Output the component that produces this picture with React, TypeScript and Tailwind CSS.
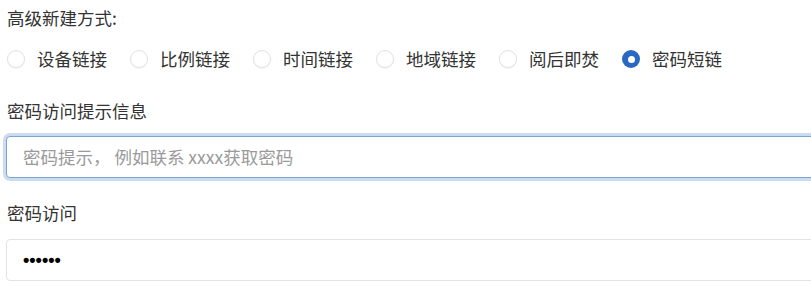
import React from "react";

const options = ["设备链接", "比例链接", "时间链接", "地域链接", "阅后即焚", "密码短链"];

function Radio({ label, checked }: { label: string; checked?: boolean }) {
  return (
    <div className="flex items-center w-[123px] shrink-0">
      {checked ? (
        <span className="w-[18px] h-[18px] rounded-full bg-[#2a69c1] flex items-center justify-center shrink-0">
          <span className="w-[7px] h-[7px] rounded-full bg-white" />
        </span>
      ) : (
        <span className="w-[18px] h-[18px] rounded-full border border-[#e2e2e2] bg-white shadow-[0_1px_1px_rgba(0,0,0,0.05)] shrink-0" />
      )}
      <span className="ml-[12px] text-[17.5px] leading-6 text-[#333]">{label}</span>
    </div>
  );
}

export default function App() {
  return (
    <div
      className="w-[811px] h-[305px] overflow-hidden bg-white pl-[6px] pt-[6px]"
      style={{ fontFamily: '"Microsoft YaHei", "Noto Sans CJK SC", "Noto Sans", sans-serif' }}
    >
      <div className="flex flex-col">
        <div className="h-6 leading-6 text-[17.5px] text-[#333] pl-[1px]">高级新建方式:</div>
        <div className="mt-[17px] h-6 flex items-center pl-[1px]">
          {options.map((o, i) => (
            <Radio key={o} label={o} checked={i === options.length - 1} />
          ))}
        </div>
        <div className="mt-[28px] h-6 leading-6 text-[17.5px] text-[#333] pl-[1px]">密码访问提示信息</div>
        <div className="mt-[13px] w-[830px] h-[42px] rounded-[4px] border border-[#7ea3d3] shadow-[0_0_0_3px_#cadcf1] flex items-center px-[16px] bg-white">
          <span className="text-[17.5px] text-[#9a9a9a] leading-6 whitespace-pre">密码提示， 例如联系 xxxx获取密码</span>
        </div>
        <div className="mt-[23px] h-6 leading-6 text-[17.5px] text-[#333] pl-[1px]">密码访问</div>
        <div className="mt-[14px] w-[830px] h-[42px] rounded-[4px] border border-[#e3e3e3] flex items-center px-[16px] bg-white">
          <span
            className="text-[18px] leading-6 text-black font-bold"
            style={{ fontFamily: '"Liberation Sans", Arial, sans-serif' }}
          >
            ••••••
          </span>
        </div>
      </div>
    </div>
  );
}
